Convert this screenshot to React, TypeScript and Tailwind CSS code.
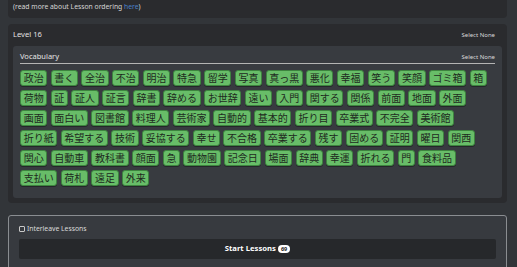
const vocab: string[] = [
  '政治', '書く', '全治', '不治', '明治', '特急', '留学', '写真', '真っ黒', '悪化', '幸福', '笑う', '笑顔', 'ゴミ箱', '箱',
  '荷物', '証', '証人', '証言', '辞書', '辞める', 'お世辞', '遠い', '入門', '関する', '関係', '前面', '地面', '外面',
  '画面', '面白い', '図書館', '料理人', '芸術家', '自動的', '基本的', '折り目', '卒業式', '不完全', '美術館',
  '折り紙', '希望する', '技術', '妥協する', '幸せ', '不合格', '卒業する', '残す', '固める', '証明', '曜日', '関西',
  '関心', '自動車', '教科書', '顔面', '急', '動物園', '記念日', '場面', '辞典', '幸運', '折れる', '門', '食料品',
  '支払い', '荷札', '遠足', '外来',
];

// tile width by character count
const widths: Record<number, string> = {
  1: 'w-[17.3px]',
  2: 'w-[27.3px]',
  3: 'w-[37.3px]',
  4: 'w-[47.3px]',
};

export default function App() {
  return (
    <div className="w-[517px] h-[267px] overflow-hidden bg-[#323539] pl-[8px] pr-[10px] font-['Noto_Sans','Noto_Sans_CJK_JP',sans-serif]">
      <div className="h-[18px] bg-[#2a2b2e] rounded-b-[4px] pl-[5px] text-[6.8px] leading-[14px] text-[#d6d6d6]">
        (read more about Lesson ordering <span className="text-[#4a82c9]">here</span>)
      </div>

      <div className="mt-[6px] rounded-[4px] bg-[#2a2b2e] px-[5px] pb-[5px]">
        <div className="h-[22px] flex items-center justify-between pr-[7px]">
          <span className="text-[7.6px] text-[#e2e2e2]">Level 16</span>
          <span className="text-[6px] text-[#d8d8d8]">Select None</span>
        </div>

        <div className="bg-[#383b40] rounded-[3px] px-[7px] pt-[5px] pb-[12px]">
          <div className="h-[13px] flex items-center justify-between border-b border-[#b4b4b4]">
            <span className="text-[7.5px] text-[#e4e4e4]">Vocabulary</span>
            <span className="text-[6px] text-[#d8d8d8]">Select None</span>
          </div>
          <div className="mt-[6px] pr-[1px] flex flex-wrap gap-x-[3.4px] gap-y-[4px]">
            {vocab.map((w) => (
              <span
                key={w}
                className={`${widths[w.length]} h-[16px] shrink-0 flex items-center justify-center whitespace-nowrap border border-[#3d843f] rounded-[3px] bg-[#68bd68] text-[10px] leading-[14px] text-[#1e2a1e] shadow-[0_1px_0_rgba(0,0,0,0.35)]`}
              >
                {w}
              </span>
            ))}
          </div>
        </div>
      </div>

      <div className="mt-[12px] border border-[#8a8d91] rounded-[3px] bg-[#373a3f] px-[10px] pt-[8px] h-[60px]">
        <div className="h-[10px] flex items-center gap-[2px]">
          <span className="w-[6px] h-[6px] border border-[#c8c8c8] rounded-[1px]"></span>
          <span className="text-[6.8px] text-[#dcdcdc]">Interleave Lessons</span>
        </div>
        <div className="mt-[5px] h-[20px] rounded-[2px] bg-[#26282b] flex items-center justify-center gap-[2px]">
          <span className="text-[7.7px] font-bold text-white">Start Lessons</span>
          <span className="h-[8px] px-[3px] rounded-full bg-white text-[5.5px] leading-[8px] font-bold text-[#222]">69</span>
        </div>
      </div>
    </div>
  );
}
